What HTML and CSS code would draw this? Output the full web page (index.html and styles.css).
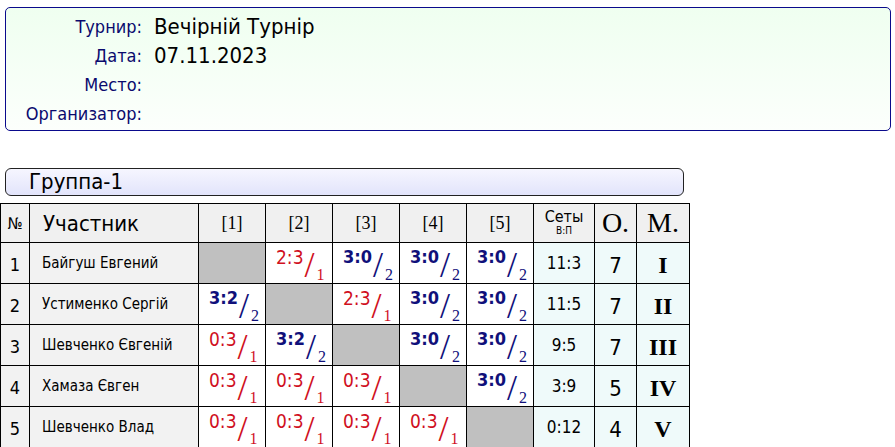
FILE: index.html
```html
<!DOCTYPE html>
<html>
<head>
<meta charset="utf-8">
<link rel="stylesheet" href="styles.css">
</head>
<body>
<div class="info">
  <div class="lbl">Турнир:</div><div class="val">Вечірній Турнір</div>
  <div class="lbl">Дата:</div><div class="val">07.11.2023</div>
  <div class="lbl">Место:</div><div class="val"></div>
  <div class="lbl">Организатор:</div><div class="val"></div>
</div>
<div class="group">Группа-1</div>
<table class="grid">
  <colgroup>
    <col class="c-no"><col class="c-name"><col class="c-sc"><col class="c-sc"><col class="c-sc"><col class="c-sc"><col class="c-sc"><col class="c-sets"><col class="c-pts"><col class="c-pl">
  </colgroup>
  <thead>
    <tr>
      <th class="h-no">№</th>
      <th class="h-name">Участник</th>
      <th class="h-col">[1]</th>
      <th class="h-col">[2]</th>
      <th class="h-col">[3]</th>
      <th class="h-col">[4]</th>
      <th class="h-col">[5]</th>
      <th class="h-sets">Сеты<span class="sub">В:П</span></th>
      <th class="h-big">O.</th>
      <th class="h-big">M.</th>
    </tr>
  </thead>
  <tbody>
    <tr>
      <td class="no">1</td><td class="name">Байгуш Евгений</td>
      <td class="diag"></td>
      <td class="sc lose"><div class="in"><span class="m">2:3</span><span class="sl">/</span><span class="d">1</span></div></td>
      <td class="sc win"><div class="in"><span class="m">3:0</span><span class="sl">/</span><span class="d">2</span></div></td>
      <td class="sc win"><div class="in"><span class="m">3:0</span><span class="sl">/</span><span class="d">2</span></div></td>
      <td class="sc win"><div class="in"><span class="m">3:0</span><span class="sl">/</span><span class="d">2</span></div></td>
      <td class="sets">11:3</td><td class="pts">7</td><td class="pl">I</td>
    </tr>
    <tr>
      <td class="no">2</td><td class="name">Устименко Сергій</td>
      <td class="sc win"><div class="in"><span class="m">3:2</span><span class="sl">/</span><span class="d">2</span></div></td>
      <td class="diag"></td>
      <td class="sc lose"><div class="in"><span class="m">2:3</span><span class="sl">/</span><span class="d">1</span></div></td>
      <td class="sc win"><div class="in"><span class="m">3:0</span><span class="sl">/</span><span class="d">2</span></div></td>
      <td class="sc win"><div class="in"><span class="m">3:0</span><span class="sl">/</span><span class="d">2</span></div></td>
      <td class="sets">11:5</td><td class="pts">7</td><td class="pl">II</td>
    </tr>
    <tr>
      <td class="no">3</td><td class="name">Шевченко Євгеній</td>
      <td class="sc lose"><div class="in"><span class="m">0:3</span><span class="sl">/</span><span class="d">1</span></div></td>
      <td class="sc win"><div class="in"><span class="m">3:2</span><span class="sl">/</span><span class="d">2</span></div></td>
      <td class="diag"></td>
      <td class="sc win"><div class="in"><span class="m">3:0</span><span class="sl">/</span><span class="d">2</span></div></td>
      <td class="sc win"><div class="in"><span class="m">3:0</span><span class="sl">/</span><span class="d">2</span></div></td>
      <td class="sets">9:5</td><td class="pts">7</td><td class="pl">III</td>
    </tr>
    <tr>
      <td class="no">4</td><td class="name">Хамаза Євген</td>
      <td class="sc lose"><div class="in"><span class="m">0:3</span><span class="sl">/</span><span class="d">1</span></div></td>
      <td class="sc lose"><div class="in"><span class="m">0:3</span><span class="sl">/</span><span class="d">1</span></div></td>
      <td class="sc lose"><div class="in"><span class="m">0:3</span><span class="sl">/</span><span class="d">1</span></div></td>
      <td class="diag"></td>
      <td class="sc win"><div class="in"><span class="m">3:0</span><span class="sl">/</span><span class="d">2</span></div></td>
      <td class="sets">3:9</td><td class="pts">5</td><td class="pl">IV</td>
    </tr>
    <tr>
      <td class="no">5</td><td class="name">Шевченко Влад</td>
      <td class="sc lose"><div class="in"><span class="m">0:3</span><span class="sl">/</span><span class="d">1</span></div></td>
      <td class="sc lose"><div class="in"><span class="m">0:3</span><span class="sl">/</span><span class="d">1</span></div></td>
      <td class="sc lose"><div class="in"><span class="m">0:3</span><span class="sl">/</span><span class="d">1</span></div></td>
      <td class="sc lose"><div class="in"><span class="m">0:3</span><span class="sl">/</span><span class="d">1</span></div></td>
      <td class="diag"></td>
      <td class="sets">0:12</td><td class="pts">4</td><td class="pl">V</td>
    </tr>
  </tbody>
</table>
</body>
</html>
```
FILE: styles.css
```css
html, body {
  margin: 0;
  padding: 0;
  background: #ffffff;
  font-family: "DejaVu Sans Condensed", "DejaVu Sans", Verdana, sans-serif;
  color: #000;
}

.info {
  margin: 7px 0 0 5px;
  width: 884px;
  height: 118px;
  padding: 4px 0 0 0;
  border: 1px solid #0a0a8c;
  border-radius: 5px;
  background: linear-gradient(#effff0, #fcfffc);
  display: grid;
  grid-template-columns: 136px 1fr;
  grid-auto-rows: 29px;
  column-gap: 12px;
  align-items: center;
}

.lbl {
  text-align: right;
  font-size: 18px;
  color: #0a0a6e;
}

.val {
  font-size: 22px;
  color: #000;
}

.group {
  margin: 37px 0 0 5px;
  width: 654px;
  height: 26px;
  padding-left: 23px;
  border: 1px solid #222;
  border-radius: 6px;
  background: linear-gradient(#f6f6ff, #e2e4fb);
  font-size: 22px;
  line-height: 26px;
}

.grid {
  margin-top: 7px;
  border-collapse: collapse;
  table-layout: fixed;
  width: 690px;
}

.c-no { width: 29px; }
.c-name { width: 169px; }
.c-sc { width: 67px; }
.c-sets { width: 61px; }
.c-pts { width: 42px; }
.c-pl { width: 53px; }

.grid th, .grid td {
  border: 1px solid #000;
  padding: 0;
}

.grid thead tr { height: 39px; }
.grid tbody tr { height: 41px; }

.grid thead th {
  background: #f0f0f0;
  font-weight: normal;
  text-align: center;
  vertical-align: middle;
}

.h-no { font-size: 16px; }
.grid thead .h-name { font-size: 22px; text-align: left; padding-left: 13px; }
.h-col { font-family: "Liberation Serif", "Times New Roman", serif; font-size: 18px; }
.h-sets { font-size: 16px; line-height: 15px; }
.h-sets .sub { display: block; font-size: 10px; line-height: 14px; }
.h-big { font-family: "Liberation Serif", "Times New Roman", serif; font-size: 28px; }

.grid tbody td { vertical-align: middle; }

.grid tbody .no {
  background: #f2f2f2;
  text-align: center;
  font-size: 18px;
  padding-top: 2px;
}

.grid tbody .name {
  background: #f2f2f2;
  padding-left: 12px;
  font-size: 15px;
}

.diag { background: #c0c0c0; }

.grid tbody .sc { background: #fff; vertical-align: top; }
.sc .in {
  display: flex;
  align-items: flex-start;
  height: 38px;
  padding-left: 10px;
}
.sc .m {
  font-size: 18px;
  line-height: 20px;
  margin-top: 4px;
}
.sc .sl {
  font-family: "Liberation Serif", "Times New Roman", serif;
  font-size: 36px;
  line-height: 30px;
  margin-top: 7px;
  margin-left: 1px;
}
.sc .d {
  font-family: "Liberation Serif", "Times New Roman", serif;
  font-size: 16px;
  line-height: 12px;
  margin-top: 26px;
  margin-left: 2px;
}
.win { color: #10107a; }
.win .m { font-weight: bold; }
.lose { color: #d0101e; }
.lose .m { font-size: 19px; }

.sets, .pts, .pl {
  background: #effafa;
  text-align: center;
}
.sets { font-size: 17px; }
.grid tbody .pts { font-size: 22px; padding-top: 4px; }
.grid tbody .pl {
  font-family: "Liberation Serif", "Times New Roman", serif;
  font-weight: bold;
  font-size: 24px;
  padding-top: 5px;
}
```
